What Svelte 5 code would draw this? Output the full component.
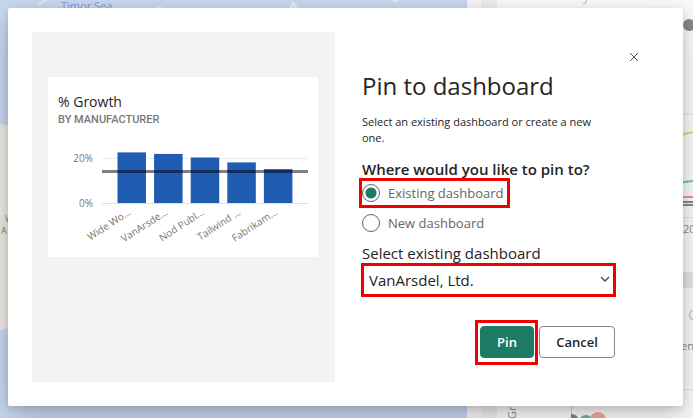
<script lang="ts">
	type Bar = { label: string; value: number };

	const bars: Bar[] = [
		{ label: 'Wide Wo...', value: 22.7 },
		{ label: 'VanArsde...', value: 22 },
		{ label: 'Nod Publ...', value: 20.4 },
		{ label: 'Tailwind ...', value: 18.2 },
		{ label: 'Fabrikam...', value: 15.2 }
	];

	const baseY = 60;
	const unit = 2.23;
	const average = 14.1;
	const barX = (i: number) => 59.5 + i * 36.6;

	let target = $state('existing');
	let dashboard = $state('VanArsdel, Ltd.');
</script>

<div class="page">
	<svg class="report" viewBox="0 0 693 418" preserveAspectRatio="xMidYMid slice" aria-hidden="true">
		<rect width="693" height="418" fill="#fafafa" />
		<rect width="467" height="418" fill="#c8d7f1" />
		<path d="M0 124L9 126V328L0 330Z" fill="#eeebe6" />
		<path d="M38 3l6-3h4l-8 5zM153 8q5-3 11 0zM289 8l4-7 5 7zM391 0h8l-3 3z" fill="#e4ebe6" />
		<text x="61" y="10" font-size="11" fill="#8795c8">Timor Sea</text>
		<text x="5" y="222" font-size="9" fill="#8d7974">W</text>
		<text x="1" y="234" font-size="9" fill="#8d7974">A</text>
		<rect x="467" width="14" height="418" fill="#f6f6f6" />
		<rect x="481" width="16" height="418" fill="#eaedf1" />
		<text x="583" y="0" font-size="14" fill="#bdbdbd">y</text>
		<circle cx="689" cy="25" r="6" fill="#808989" />
		<path d="M683 114H693M683 217.500H693M683 389.500H693" stroke="#e3e3e3" />
		<path d="M680 135L693 132" stroke="#ead36a" stroke-width="2" />
		<path d="M680 182.500L693 181" stroke="#63c7bb" stroke-width="2" />
		<path d="M680 197H693" stroke="#f58c8c" stroke-width="2" />
		<path d="M680 202H693M680 205H693" stroke="#828b8b" stroke-width="2" />
		<text x="683" y="233" font-size="11" fill="#8a8a8a">20</text>
		<rect x="683" y="272" width="10" height="16" fill="#e2e5e9" />
		<text x="688" y="320" font-size="14" fill="#c2c6cc">C</text>
		<text x="681" y="350" font-size="11" fill="#728ba3">en</text>
		<text x="516" y="419" font-size="11" fill="#8f8f8f" transform="rotate(-90 516 419)">Gro</text>
		<path d="M571.500 400V418" stroke="#d5d5d5" />
		<path d="M571 414q5 0 7 4h-7z" fill="#7d8585" />
		<circle cx="586" cy="422" r="7" fill="#5db7ad" />
		<circle cx="598" cy="420" r="8" fill="#f0aa8c" />
	</svg>

	<div class="dialog" role="dialog" aria-labelledby="dialog-title">
		<div class="preview">
			<div class="tile">
				<div class="tile-title">% Growth</div>
				<div class="tile-subtitle">BY MANUFACTURER</div>
				<svg class="chart" viewBox="0 0 250 108" role="img" aria-label="% Growth by manufacturer">
					<line x1="44" x2="250" y1="15.500" y2="15.500" stroke="#eaeaea" />
					<line x1="44" x2="250" y1="60.500" y2="60.500" stroke="#dfdfdf" />
					<text class="tick" x="35" y="19">20%</text>
					<text class="tick" x="35" y="64">0%</text>
					{#each bars as bar, i}
						<rect
							x={barX(i)}
							y={baseY - bar.value * unit}
							width="28.500"
							height={bar.value * unit}
							fill="#215cb3"
						/>
						<text
							class="tick"
							x={barX(i) + 14}
							y="71"
							transform="rotate(-33 {barX(i) + 14} 71)">{bar.label}</text
						>
					{/each}
					<line
						x1="44"
						x2="250"
						y1={baseY - average * unit}
						y2={baseY - average * unit}
						stroke="#000"
						stroke-opacity="0.5"
						stroke-width="3"
					/>
				</svg>
			</div>
		</div>

		<form class="options" onsubmit={(e) => e.preventDefault()}>
			<button class="close" type="button" aria-label="Close">
				<svg viewBox="0 0 10 10" width="10" height="10">
					<path d="M1 1L9 9M9 1L1 9" stroke="#555" fill="none" />
				</svg>
			</button>
			<h1 id="dialog-title">Pin to dashboard</h1>
			<p>Select an existing dashboard or create a new one.</p>

			<fieldset>
				<legend>Where would you like to pin to?</legend>
				<label class="radio highlight">
					<input type="radio" name="target" value="existing" bind:group={target} />
					Existing dashboard
				</label>
				<label class="radio">
					<input type="radio" name="target" value="new" bind:group={target} />
					New dashboard
				</label>
			</fieldset>

			<label class="select-label" for="dashboard">Select existing dashboard</label>
			<div class="select highlight">
				<select id="dashboard" bind:value={dashboard}>
					<option>VanArsdel, Ltd.</option>
				</select>
				<svg class="chevron" viewBox="0 0 10 6" width="10" height="6">
					<path d="M1 1L5 5L9 1" stroke="#444" stroke-width="1.300" fill="none" />
				</svg>
			</div>

			<div class="actions">
				<button class="btn primary" type="submit">Pin</button>
				<button class="btn" type="button">Cancel</button>
			</div>
		</form>
	</div>
</div>

<style>
	:global(body) {
		margin: 0;
	}
	.page {
		position: relative;
		box-sizing: border-box;
		min-height: 100vh;
		padding: 8px 10px 12px 8px;
		overflow: hidden;
		font-family: 'Open Sans', 'Noto Sans', sans-serif;
		color: #252423;
	}
	.report {
		position: absolute;
		inset: 0;
		width: 100%;
		height: 100%;
	}
	.dialog {
		position: relative;
		box-sizing: border-box;
		display: grid;
		grid-template-columns: 303fr 300fr;
		gap: 24px;
		padding: 24px;
		background: #fff;
		border-radius: 2px;
		box-shadow:
			0 10px 28px rgba(0, 0, 0, 0.22),
			0 2px 6px rgba(0, 0, 0, 0.12);
	}
	.preview {
		padding: 45px 17px 0 16px;
		background: #f3f3f3;
	}
	.tile {
		padding: 15px 10px 6px;
		background: #fff;
	}
	.tile-title {
		font-size: 14px;
		line-height: 20px;
	}
	.tile-subtitle {
		font-family: 'Roboto', sans-serif;
		font-size: 11px;
		font-weight: 500;
		line-height: 16px;
		color: #777;
	}
	.chart {
		display: block;
		width: 100%;
		margin-top: 15px;
		overflow: visible;
	}
	.tick {
		font-size: 10px;
		fill: #777;
		text-anchor: end;
	}
	.options {
		position: relative;
		display: flex;
		flex-direction: column;
		padding: 36px 44px 24px 3px;
	}
	.close {
		position: absolute;
		top: 16px;
		right: 16px;
		display: flex;
		padding: 4px;
		border: 0;
		background: none;
	}
	h1 {
		margin: 0;
		font-size: 24px;
		font-weight: 400;
		line-height: 36px;
	}
	p {
		margin: 10px 0 12px;
		font-size: 11px;
		line-height: 16px;
	}
	fieldset {
		display: flex;
		flex-direction: column;
		align-items: flex-start;
		gap: 6px;
		min-width: 0;
		margin: 0;
		padding: 0;
		border: 0;
	}
	legend {
		padding: 0 0 1px;
		font-size: 15px;
		font-weight: 600;
		line-height: 22px;
	}
	.radio {
		display: flex;
		align-items: center;
		gap: 8px;
		padding-right: 4px;
		font-size: 13px;
		line-height: 24px;
		color: #666;
	}
	.radio input {
		appearance: none;
		box-sizing: border-box;
		width: 18px;
		height: 18px;
		margin: 0;
		border: 1px solid #666;
		border-radius: 50%;
		background: #fff;
	}
	.radio input:checked {
		background: radial-gradient(circle, #1c7a65 5px, #fff 6px);
	}
	.highlight {
		outline: 3px solid #f00000;
	}
	.select-label {
		margin: 7px 0 0;
		font-size: 15px;
		line-height: 22px;
	}
	.select {
		position: relative;
		outline-offset: -2px;
	}
	select {
		appearance: none;
		display: block;
		width: 100%;
		height: 32px;
		padding: 0 24px 0 7px;
		border: 0;
		background: #fff;
		font: inherit;
		font-size: 15px;
		color: inherit;
	}
	.chevron {
		position: absolute;
		top: 12px;
		right: 5px;
		pointer-events: none;
	}
	.actions {
		display: flex;
		justify-content: flex-end;
		gap: 5px;
		margin-top: 30px;
	}
	.btn {
		min-width: 76px;
		height: 32px;
		padding: 0 8px;
		border: 1px solid #888;
		border-radius: 4px;
		background: #fff;
		font: inherit;
		font-size: 13px;
		font-weight: 600;
		color: #252423;
	}
	.btn.primary {
		position: relative;
		min-width: 54px;
		border-color: #1c7a65;
		background: #1c7a65;
		color: #fff;
	}
	.btn.primary::after {
		content: '';
		position: absolute;
		inset: -7px -5px -8px -6px;
		border: 3px solid #f00000;
	}
</style>
